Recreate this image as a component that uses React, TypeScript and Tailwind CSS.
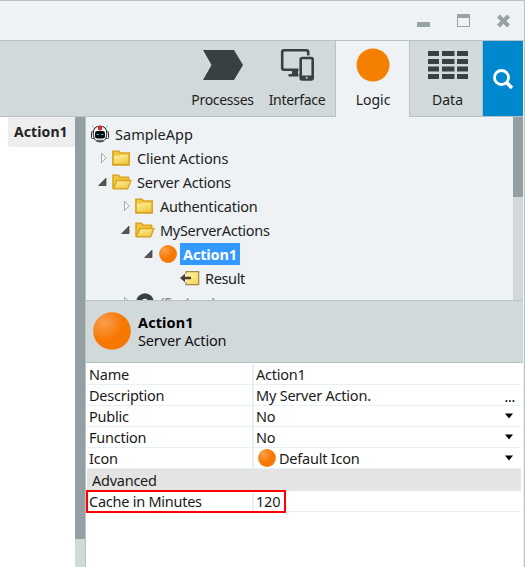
import React from "react";

function Ball({ size, id }: { size: number; id: string }) {
  return (
    <svg width={size} height={size} viewBox="0 0 38 38" className="block shrink-0">
      <defs>
        <radialGradient id={id} cx="0.3" cy="0.28" r="0.5">
          <stop offset="0" stopColor="#f9a04c" />
          <stop offset="0.5" stopColor="#f98a26" />
          <stop offset="1" stopColor="#f77800" />
        </radialGradient>
      </defs>
      <circle cx="19" cy="19" r="18.8" fill={`url(#${id})`} />
    </svg>
  );
}

function Folder({ open = false }: { open?: boolean }) {
  return (
    <svg width="20" height="16" viewBox="0 0 20 16" className="block shrink-0">
      <defs>
        <linearGradient id="folderFace" x1="0" y1="0" x2="0.6" y2="1">
          <stop offset="0" stopColor="#fdf0a6" />
          <stop offset="1" stopColor="#f3cb45" />
        </linearGradient>
      </defs>
      {open ? (
        <>
          <path d="M1 14.500V1.200H6.500L8 3.200H16.500V7" fill="#f3c640" stroke="#dda51f" strokeWidth="1.600" />
          <path d="M1.200 14.700L5 6.500H19L15.600 14.700Z" fill="url(#folderFace)" stroke="#dda51f" strokeWidth="1.500" strokeLinejoin="round" />
        </>
      ) : (
        <>
          <path d="M.9 14.500V1.200H7L8.400 3H17.200V14.500Z" fill="#f3c640" stroke="#dda51f" strokeWidth="1.600" />
          <path d="M2 5.800H6.700L8.200 4.800H16.200V13.700H2Z" fill="url(#folderFace)" />
          <path d="M.2 15H18" stroke="#d39a12" strokeWidth="1.200" />
        </>
      )}
    </svg>
  );
}

function Arrow({ open = false }: { open?: boolean }) {
  return (
    <svg width="9" height="12" viewBox="0 0 9 12" className="block shrink-0">
      {open ? (
        <path d="M8 2.2V9.5H.7Z" fill="#555" stroke="#333" strokeWidth=".7" />
      ) : (
        <path d="M2.5 1.2V10.6L7.2 5.9Z" fill="#fafafa" stroke="#a3a6a8" strokeWidth="1" />
      )}
    </svg>
  );
}

function Robot() {
  return (
    <svg width="18" height="18" viewBox="0 0 18 18" className="block shrink-0">
      <path d="M1.500 .5L3.500 3.500M16.500 .5L14.500 3.500" stroke="#999" strokeWidth=".8" />
      <rect x=".5" y="6.500" width="3" height="7" rx="1" fill="#fff" stroke="#111" strokeWidth=".9" />
      <rect x="14.500" y="6.500" width="3" height="7" rx="1" fill="#fff" stroke="#111" strokeWidth=".9" />
      <path d="M9 1.200C4.800 1.200 2.300 3.500 2.300 8.500S4.500 16.800 9 16.800s6.700-3.300 6.700-8.300S13.200 1.200 9 1.200Z" fill="#fff" stroke="#111" strokeWidth="1" />
      <path d="M7 1H11V4.500L9.500 5.500H8.500L7 4.500Z" fill="#e1252f" />
      <rect x="4" y="6" width="10" height="7.500" rx="2.200" fill="#090d12" />
      <path d="M5.500 9.500H8M10 9.500H12.500" stroke="#25b9c4" strokeWidth="1.200" />
      <path d="M6 15.300H12" stroke="#111" strokeWidth=".8" />
    </svg>
  );
}

function ResultIcon() {
  return (
    <svg width="20" height="16" viewBox="0 0 20 16" className="block shrink-0">
      <defs>
        <linearGradient id="resultFace" x1="0" y1="0" x2="1" y2="1">
          <stop offset="0" stopColor="#fdf3a4" />
          <stop offset="1" stopColor="#f7d552" />
        </linearGradient>
      </defs>
      <path d="M6 4V1.700H18.700V14.700H6V12" fill="url(#resultFace)" stroke="#a08a4c" strokeWidth="1.200" />
      <path d="M0 8L5 3.800V6.700H11V9.300H5V12.200Z" fill="#4e3c3a" />
    </svg>
  );
}

function Gear() {
  return (
    <svg width="18" height="18" viewBox="0 0 18 18" className="block shrink-0">
      <circle cx="9" cy="9" r="6" fill="none" stroke="#374144" strokeWidth="5.500" />
    </svg>
  );
}

const rowCls = "flex h-6 shrink-0 items-center";

function Tree() {
  return (
    <div className="flex min-w-0 flex-1 flex-col overflow-hidden pt-[5px] text-[14.5px] text-[#222]">
      <div className={`${rowCls} pl-[5px]`}><Robot /><span className="ml-[6px] tracking-[0.05px]">SampleApp</span></div>
      <div className={`${rowCls} pl-[13px]`}><Arrow /><span className="ml-1"><Folder /></span><span className="ml-[5px] tracking-[-0.1px]">Client Actions</span></div>
      <div className={`${rowCls} pl-[12px]`}><Arrow open /><span className="ml-[5px]"><Folder open /></span><span className="ml-[5px] tracking-[-0.25px]">Server Actions</span></div>
      <div className={`${rowCls} pl-[36px]`}><Arrow /><span className="ml-1"><Folder /></span><span className="ml-[5px] tracking-[-0.2px]">Authentication</span></div>
      <div className={`${rowCls} pl-[35px]`}><Arrow open /><span className="ml-[5px]"><Folder open /></span><span className="ml-[5px] tracking-[-0.3px]">MyServerActions</span></div>
      <div className={`${rowCls} pl-[58px]`}><Arrow open /><span className="ml-[6px]"><Ball size={18} id="treeBall" /></span><span className="ml-[3px] flex h-[22px] w-[60px] items-center bg-[#3399ff] pl-[3px] font-bold tracking-[-0.15px] text-white">Action1</span></div>
      <div className={`${rowCls} pl-[94px]`}><ResultIcon /><span className="ml-[5px] tracking-[-0.35px]">Result</span></div>
      <div className={`${rowCls} pl-[36px] text-[#777]`}><Arrow /><span className="ml-[5px]"><Gear /></span><span className="ml-[6px] tracking-[-0.3px]">(System)</span></div>
    </div>
  );
}

function Caret() {
  return (
    <svg width="8" height="6" viewBox="0 0 8 6" className="mr-[8px] ml-auto block">
      <path d="M0 .5H8L4 5.500Z" fill="#000" />
    </svg>
  );
}

function PropRow({ label, tall = false, children }: { label: string; tall?: boolean; children: React.ReactNode }) {
  return (
    <div className={`flex shrink-0 border-b border-[#e6f1f7] ${tall ? "h-[22px] pt-px" : "h-[21px]"}`}>
      <div className="flex w-[165px] items-center pl-[2px] tracking-[-0.25px]">{label}</div>
      <div className="flex flex-1 items-center border-l-2 border-[#e6f1f7] pl-[2px] tracking-[-0.22px]">{children}</div>
    </div>
  );
}

const tabCls = "flex flex-col items-center border-[#b8c3c5] text-[#222]";

export default function App() {
  return (
    <div className="flex h-[567px] w-[525px] flex-col overflow-hidden border-t border-r border-[#b8c3c5] bg-[#eef2f5] pr-px font-['Noto_Sans',sans-serif] text-[14px] leading-[20px] whitespace-nowrap">
      <div className="flex h-[39px] shrink-0 items-start justify-end">
        <svg width="106" height="39" viewBox="417 1 106 39">
          <rect x="417" y="22" width="13" height="5" fill="#96a2a5" />
          <rect x="457.500" y="14.500" width="12" height="12" fill="#eef2f5" stroke="#96a2a5" />
          <rect x="457" y="14" width="13" height="4" fill="#96a2a5" />
          <path d="M498.500 16L508.500 26M508.500 16L498.500 26" stroke="#96a2a5" strokeWidth="4" />
        </svg>
      </div>
      <div className="-mr-px flex h-[77px] shrink-0 border-t border-[#b8c3c5] pr-px">
        <div className="flex w-[336px] border-r border-b border-[#b8c3c5] bg-[#d2d9db] pl-[185px]">
          <div className={`${tabCls} w-[75px]`}>
            <svg width="42" height="32" viewBox="0 0 42 32" className="mt-2 block"><path d="M1 1H32L41 16L32 31H1L9.500 16Z" fill="#374144" /></svg>
            <span className="mt-[9px] tracking-[-0.3px]">Processes</span>
          </div>
          <div className={`${tabCls} w-[74px]`}>
            <svg width="34" height="34" viewBox="0 0 34 34" className="mt-[7px] block">
              <rect x="2.200" y="2.200" width="26" height="19.500" rx="2" fill="none" stroke="#374144" strokeWidth="2.600" />
              <path d="M12 22H18V26H21V28.500H8.500V26H12Z" fill="#374144" />
              <rect x="18.500" y="7.500" width="16" height="26" fill="#d2d9db" />
              <rect x="20.700" y="10" width="12" height="21.500" rx="1.500" fill="none" stroke="#374144" strokeWidth="2.600" />
              <path d="M20 27.500H33V32H20Z" fill="#374144" /><circle cx="26.700" cy="29.700" r="1" fill="#d2d9db" />
            </svg>
            <span className="mt-[8px] tracking-[-0.3px]">Interface</span>
          </div>
        </div>
        <div className={`${tabCls} w-[73px] pl-px`}>
          <svg width="34" height="34" viewBox="0 0 34 34" className="mt-[7px] block"><circle cx="17" cy="17" r="16.500" fill="#f57f00" /></svg>
          <span className="mt-[8px]">Logic</span>
        </div>
        <div className={`${tabCls} w-[74px] border-r border-b border-l bg-[#d2d9db] pl-[3px]`}>
          <svg width="40" height="28" viewBox="0 0 40 28" className="mt-[10px] block" fill="#374144">
            {[0, 8, 15.500, 23].map((y) => [0, 14, 29].map((x) => <rect key={`${x}-${y}`} x={x} y={y} width={x === 14 ? 12.500 : 11} height="5" />))}
          </svg>
          <span className="mt-[11px]">Data</span>
        </div>
        <div className="flex w-[40px] items-center justify-center border-b border-[#b8c3c5] bg-[#0088cf]">
          <svg width="22" height="22" viewBox="0 0 22 22" fill="none" stroke="#fff"><circle cx="9.500" cy="9.500" r="7" strokeWidth="2.800" /><path d="M14.500 14.500L20 20" strokeWidth="3.400" /></svg>
        </div>
      </div>
      <div className="flex min-h-0 flex-1">
        <div className="flex w-[75px] items-start bg-white pl-2">
          <div className="flex h-[30px] w-[67px] items-center rounded-bl-[3px] bg-[#eeeeee] pl-[6px] font-bold tracking-[0.1px] text-[#222]">Action1</div>
        </div>
        <div className="w-[10px] bg-[#d2d9db]"><div className="h-[422px] bg-[#949fa3]" /></div>
        <div className="flex min-w-0 flex-1 flex-col border-l border-[#b8c3c5]">
          <div className="flex h-[183px] shrink-0">
            <Tree />
            <div className="w-[10px] bg-[#d2d9db]"><div className="h-[80px] bg-[#949fa3]" /></div>
          </div>
          <div className="flex h-[63px] shrink-0 items-start border-y border-[#b8c3c5] bg-[#d2d9db] pt-[11px] pl-[7px]">
            <Ball size={38} id="headBall" />
            <div className="ml-[7px] pt-px text-[14.5px] leading-[18px]">
              <div className="font-bold tracking-[0.1px] text-black">Action1</div>
              <div className="tracking-[-0.15px] text-[#111]">Server Action</div>
            </div>
          </div>
          <div className="relative flex flex-1 flex-col bg-white pr-[2px] pl-px text-[14.5px] text-[#1a1a1a]">
            <PropRow label="Name" tall>Action1</PropRow>
            <PropRow label="Description">My Server Action.<span className="mt-[4px] mr-[6px] ml-auto text-[14px] text-black">...</span></PropRow>
            <PropRow label="Public">No<Caret /></PropRow>
            <PropRow label="Function">No<Caret /></PropRow>
            <PropRow label="Icon"><span className="ml-[2px]"><Ball size={18} id="rowBall" /></span><span className="ml-[3px]">Default Icon</span><Caret /></PropRow>
            <div className="flex h-[22px] shrink-0 items-center bg-[#e4e4e4] pl-[5px] tracking-[-0.25px]">Advanced</div>
            <PropRow label="Cache in Minutes">120</PropRow>
            <div className="absolute top-[127px] left-0 h-[23px] w-[200px] border-2 border-[#f00]" />
          </div>
        </div>
      </div>
    </div>
  );
}
